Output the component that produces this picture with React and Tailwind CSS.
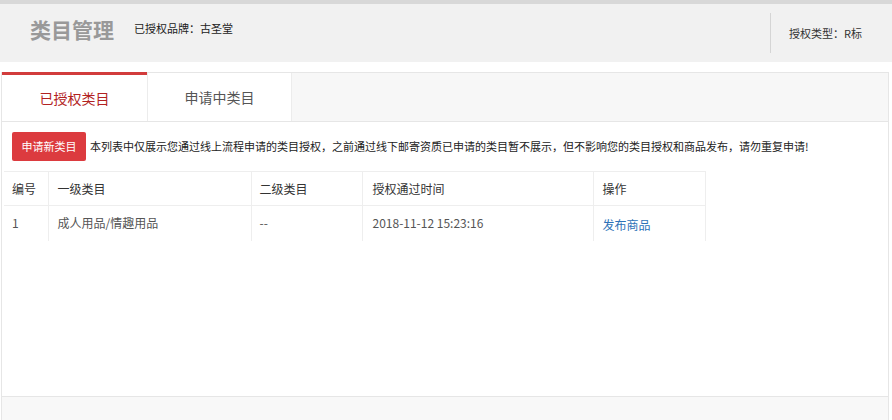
import React from "react";

const rows = [
  { id: 1, first: "成人用品/情趣用品", second: "--", time: "2018-11-12 15:23:16" },
];

const font = {
  fontFamily: '"Microsoft YaHei", "Noto Sans CJK SC", "Noto Sans", sans-serif',
};

export default function App() {
  return (
    <div className="w-[892px] h-[420px] overflow-hidden bg-white text-[12px] text-[#333]" style={font}>
      {/* ================= HEADER ================= */}
      <div className="border-t-[4px] border-[#d8d8d8] bg-[#f1f1f1] h-[62px] flex items-center">
        <h1 className="ml-[30px] -mt-[6px] text-[21px] font-bold text-[#999]">类目管理</h1>
        <span className="ml-[20px] -mt-[9px] text-[11px] text-[#222]">已授权品牌：古圣堂</span>
        <div className="ml-auto flex items-center h-full">
          <div className="w-px h-[40px] bg-[#d5d5d5]" />
          <span className="pl-[18px] pr-[30px] text-[11px] text-[#333]">授权类型：R标</span>
        </div>
      </div>

      <div className="h-[10px] bg-white" />

      {/* ================= TABS ================= */}
      <div className="mx-[1px] mr-[3px] border border-[#e6e6e6] bg-[#f7f7f7] flex h-[50px]">
        <div className="w-[145px] bg-white border-t-[3px] border-[#d23c3c] -mt-px flex items-center justify-center text-[14px] text-[#b22222]">
          已授权类目
        </div>
        <div className="w-[145px] bg-white border-r border-l border-[#ececec] flex items-center justify-center text-[14px] text-[#555]">
          申请中类目
        </div>
      </div>

      {/* ================= CONTENT ================= */}
      <div className="mx-[1px] mr-[3px] border-x border-[#e6e6e6] h-[274px] bg-white px-[2px]">
        <div className="flex items-center pt-[10px] pl-[8px]">
          <button className="h-[29px] w-[74px] rounded-[2px] bg-[#dc3b3f] text-white text-[11px]">申请新类目</button>
          <span className="ml-[4px] text-[11px] text-[#222]">
            本列表中仅展示您通过线上流程申请的类目授权，之前通过线下邮寄资质已申请的类目暂不展示，但不影响您的类目授权和商品发布，请勿重复申请!
          </span>
        </div>

        <table className="mt-[10px] border-collapse w-[702px]">
          <thead>
            <tr className="h-[34px] text-left text-[#333]">
              <th className="w-[44px] pl-[8px] font-normal border-b border-r border-t border-[#eeeeee]">编号</th>
              <th className="w-[203px] pl-[9px] font-normal border border-[#eeeeee]">一级类目</th>
              <th className="w-[111px] pl-[8px] font-normal border border-[#eeeeee]">二级类目</th>
              <th className="w-[231px] pl-[10px] font-normal border border-[#eeeeee]">授权通过时间</th>
              <th className="pl-[9px] font-normal border border-[#eeeeee]">操作</th>
            </tr>
          </thead>
          <tbody>
            {rows.map((r) => (
              <tr key={r.id} className="h-[35px] text-[#555]">
                <td className="pl-[8px] border-r border-[#eeeeee]">{r.id}</td>
                <td className="pl-[9px] border-x border-[#eeeeee]">{r.first}</td>
                <td className="pl-[8px] border-x border-[#eeeeee]">{r.second}</td>
                <td className="pl-[10px] border-x border-[#eeeeee]">{r.time}</td>
                <td className="pl-[9px] pt-[3px] border-x border-[#eeeeee]">
                  <a className="text-[#2d72b8] cursor-pointer">发布商品</a>
                </td>
              </tr>
            ))}
          </tbody>
        </table>
      </div>

      {/* ================= FOOTER ================= */}
      <div className="mx-[1px] mr-[3px] border border-[#e6e6e6] bg-[#f8f8f8] h-[40px]" />
    </div>
  );
}
